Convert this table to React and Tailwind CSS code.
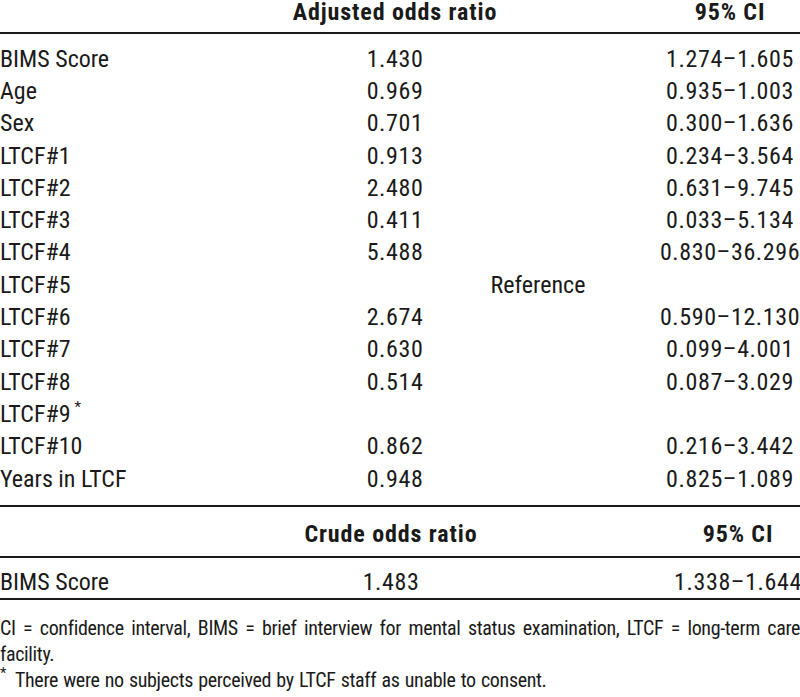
const FONT = "font-['Roboto','Liberation_Sans',Arial,sans-serif] [font-stretch:75%]";

const ROWS = [
  { label: 'BIMS Score', or: '1.430', ci: '1.274–1.605' },
  { label: 'Age', or: '0.969', ci: '0.935–1.003' },
  { label: 'Sex', or: '0.701', ci: '0.300–1.636' },
  { label: 'LTCF#1', or: '0.913', ci: '0.234–3.564' },
  { label: 'LTCF#2', or: '2.480', ci: '0.631–9.745' },
  { label: 'LTCF#3', or: '0.411', ci: '0.033–5.134' },
  { label: 'LTCF#4', or: '5.488', ci: '0.830–36.296' },
  { label: 'LTCF#5', reference: true },
  { label: 'LTCF#6', or: '2.674', ci: '0.590–12.130' },
  { label: 'LTCF#7', or: '0.630', ci: '0.099–4.001' },
  { label: 'LTCF#8', or: '0.514', ci: '0.087–3.029' },
  { label: 'LTCF#9', star: true },
  { label: 'LTCF#10', or: '0.862', ci: '0.216–3.442' },
  { label: 'Years in LTCF', or: '0.948', ci: '0.825–1.089' },
];

function Label({ children, star }) {
  return (
    <div className="whitespace-nowrap">
      {children}
      {star && <span className="relative -top-[10px] ml-[4px] text-[15px] leading-none">*</span>}
    </div>
  );
}

function Num({ children }) {
  return <div className="flex justify-center whitespace-nowrap tracking-[0.6px]"><span>{children}</span></div>;
}

export default function App() {
  return (
    <div className={`w-[800px] h-[697px] bg-white text-[#1a1a1a] ${FONT} text-[24px] overflow-hidden`}>
      {/* adjusted table */}
      <div className="grid grid-cols-[276px_238px_146px_140px] font-bold leading-[24px] tracking-[0.9px] pb-2 border-b-2 border-[#1a1a1a]">
        <div />
        <div className="flex justify-center whitespace-nowrap">Adjusted odds ratio</div>
        <div />
        <div className="flex justify-center whitespace-nowrap">95% CI</div>
      </div>
      <div className="grid grid-cols-[276px_238px_146px_140px] leading-[32.3px] pt-[8.7px] pb-[10px] border-b-2 border-[#1a1a1a]">
        {ROWS.map(r => (
          <div key={r.label} className="contents">
            <Label star={r.star}>{r.label}</Label>
            {r.reference ? (
              <div className="col-span-3 flex justify-center">Reference</div>
            ) : (
              <>
                <Num>{r.or}</Num>
                <div />
                <Num>{r.ci}</Num>
              </>
            )}
          </div>
        ))}
      </div>

      {/* crude table */}
      <div className="grid grid-cols-[276px_230px_170px_124px] font-bold leading-[24px] tracking-[0.9px] mt-[15px] pb-[10px] border-b-2 border-[#1a1a1a]">
        <div />
        <div className="flex justify-center whitespace-nowrap">Crude odds ratio</div>
        <div />
        <div className="flex justify-center whitespace-nowrap">95% CI</div>
      </div>
      <div className="grid grid-cols-[276px_230px_170px_124px] leading-[32.3px] pt-[7.7px] border-b-2 border-[#1a1a1a]">
        <Label>BIMS Score</Label>
        <Num>1.483</Num>
        <div />
        <Num>1.338–1.644</Num>
      </div>

      {/* footnotes */}
      <div className="mt-[15px] text-[20px] leading-[26px] tracking-[-0.35px]">
        <p className="text-justify">
          CI = confidence interval, BIMS = brief interview for mental status examination, LTCF = long-term care facility.
        </p>
        <p className="flex items-start">
          <span className="text-[15px] leading-none -mt-[1px] w-[15px]">*</span>
          <span className="[word-spacing:1px]">There were no subjects perceived by LTCF staff as unable to consent.</span>
        </p>
      </div>
    </div>
  );
}
